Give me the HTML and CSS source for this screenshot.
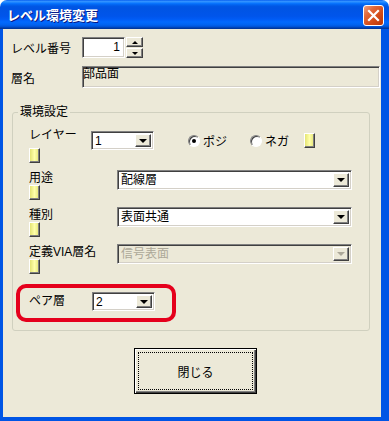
FILE: index.html
```html
<!DOCTYPE html>
<html lang="ja">
  <head>
    <meta charset="UTF-8" />
    <title>レベル環境変更</title>
    <link rel="stylesheet" href="styles.css">
  </head>
  <body>
    <div class="window">
      <div class="titlebar">
        <span class="title">レベル環境変更</span>
        <span class="close-btn">
          <svg width="19" height="19" viewBox="0 0 19 19">
            <path d="M5 5 L14 14 M14 5 L5 14" stroke="#fff" stroke-width="2.2" stroke-linecap="square" />
          </svg>
        </span>
      </div>

      <div class="client">
        <div class="field-row level-row">
          <span class="label">レベル番号</span>
          <div class="spin">
            <div class="spin-edit">1</div>
            <div class="spin-btns">
              <span class="spin-btn"><i class="arrow-up"></i></span>
              <span class="spin-btn"><i class="arrow-down"></i></span>
            </div>
          </div>
        </div>

        <div class="field-row name-row">
          <span class="label">層名</span>
          <div class="text-field">部品面</div>
        </div>

        <fieldset class="group">
          <legend>環境設定</legend>
          <div class="group-body">
            <!-- layer -->
            <div class="item layer-item">
              <div class="item-head">
                <span class="item-label">レイヤー</span>
                <span class="mini"></span>
              </div>
              <div class="line">
                <div class="combo combo-small">
                  <span class="combo-text">1</span>
                  <span class="drop-btn"><i class="arrow-down big"></i></span>
                </div>
                <span class="radio checked"></span><span class="radio-text">ポジ</span>
                <span class="radio nega"></span><span class="radio-text">ネガ</span>
                <span class="mini mini-right"></span>
              </div>
            </div>

            <div class="item">
              <div class="item-head wide">
                <span class="item-label">用途</span>
                <span class="mini"></span>
              </div>
              <div class="combo combo-wide">
                <span class="combo-text">配線層</span>
                <span class="drop-btn"><i class="arrow-down big"></i></span>
              </div>
            </div>

            <div class="item">
              <div class="item-head wide">
                <span class="item-label">種別</span>
                <span class="mini"></span>
              </div>
              <div class="combo combo-wide">
                <span class="combo-text">表面共通</span>
                <span class="drop-btn"><i class="arrow-down big"></i></span>
              </div>
            </div>

            <div class="item">
              <div class="item-head wide">
                <span class="item-label">定義VIA層名</span>
                <span class="mini"></span>
              </div>
              <div class="combo combo-wide disabled">
                <span class="combo-text">信号表面</span>
                <span class="drop-btn"><i class="arrow-down big"></i></span>
              </div>
            </div>

            <div class="pair-box">
              <span class="pair-label">ペア層</span>
              <div class="combo combo-small">
                <span class="combo-text">2</span>
                <span class="drop-btn"><i class="arrow-down big"></i></span>
              </div>
            </div>
          </div>
        </fieldset>

        <div class="button-row">
          <button class="close-dialog"><span class="focus-rect">閉じる</span></button>
        </div>
      </div>
    </div>
  </body>
</html>
```

FILE: styles.css
```css
body {
  margin: 0;
  background: #fff;
  font-family: "Liberation Sans", "Noto Sans CJK JP", sans-serif;
  font-size: 12px;
  color: #000;
}
.window {
  width: 389px;
  height: 421px;
  display: flex;
  flex-direction: column;
}

/* title bar */
.titlebar {
  height: 29px;
  flex: none;
  box-sizing: border-box;
  padding: 0 5px 0 7px;
  display: flex;
  align-items: center;
  justify-content: space-between;
  border-radius: 7px 7px 0 0;
  background: linear-gradient(to bottom, #0058ee 0%, #3593ff 4%, #288eff 7%, #127dff 10%, #036ffc 13%, #0262ee 17%, #0057e5 22%, #0054e3 28%, #0055eb 56%, #005bf5 66%, #026afe 76%, #0062ef 86%, #0052d6 92%, #0040ab 96%, #003092 100%);
}
.title {
  color: #fff;
  font-weight: bold;
  font-size: 13px;
  line-height: 16px;
  margin-top: 3px;
  text-shadow: 1px 1px #0a1883;
}
.close-btn {
  width: 21px;
  height: 21px;
  box-sizing: border-box;
  margin-top: 2px;
  border: 1px solid #fff;
  border-radius: 3px;
  display: flex;
  background: linear-gradient(135deg, #eea184 0%, #e2683a 30%, #d24a17 65%, #b8360a 100%);
}

/* client area */
.client {
  flex: 1;
  background: #ece9d8;
  border-left: 3px solid #0055e5;
  border-right: 8px solid #0055e5;
  border-bottom: 4px solid #0055e5;
  padding: 8px 0 0 8px;
}
.field-row {
  display: flex;
  align-items: center;
}
.field-row .label {
  width: 71px;
  flex: none;
}
.level-row {
  height: 21px;
}
.name-row {
  height: 22px;
  margin-top: 8px;
}

.spin {
  display: flex;
}
.spin-edit,
.text-field,
.combo {
  box-sizing: border-box;
  border: 1px solid;
  border-color: #808080 #fff #fff #808080;
  box-shadow: inset 1px 1px #404040, inset -1px -1px #d4d0c8;
}
.spin-edit {
  width: 43px;
  height: 21px;
  background: #fff;
  text-align: right;
  padding-right: 4px;
  line-height: 19px;
}
.spin-btns {
  display: flex;
  flex-direction: column;
  gap: 1px;
  margin-left: 1px;
}
.spin-btn,
.drop-btn,
.mini {
  box-sizing: border-box;
  border: 1px solid;
  border-color: #fff #404040 #404040 #fff;
  box-shadow: inset -1px -1px #808080;
}
.spin-btn {
  width: 17px;
  height: 10px;
  background: #ece9d8;
  display: flex;
  align-items: center;
  justify-content: center;
}
.arrow-up,
.arrow-down {
  width: 0;
  height: 0;
  border-left: 3px solid transparent;
  border-right: 3px solid transparent;
}
.arrow-up {
  border-bottom: 3px solid #000;
}
.arrow-down {
  border-top: 3px solid #000;
}
.arrow-down.big {
  border-left-width: 4px;
  border-right-width: 4px;
  border-top-width: 4px;
}
.text-field {
  width: 298px;
  height: 22px;
  background: #ece9d8;
  line-height: 14px;
}

/* group */
.group {
  margin: 17px 0 0 1px;
  padding: 0;
  width: 358px;
  height: 226px;
  box-sizing: border-box;
  border: 1px solid #d0d0bf;
  border-radius: 3px;
}
.group legend {
  margin-left: 5px;
  padding: 0 2px;
  line-height: 14px;
}
.group-body {
  padding: 12px 0 0 16px;
}
.item {
  display: flex;
  align-items: flex-start;
  margin-top: 7px;
}
.layer-item {
  margin-top: 0;
}
.item-head {
  display: flex;
  flex-direction: column;
  flex: none;
  width: 62px;
}
.item-head.wide {
  width: 88px;
}
.item-label {
  line-height: 14px;
  margin-top: 1px;
}
.layer-item .item-label {
  margin-top: -3px;
  margin-bottom: 6px;
}
.mini {
  width: 11px;
  height: 15px;
  background: linear-gradient(to right, #e4e474, #ffffaa 50%, #e4e474);
}
.line {
  display: flex;
  align-items: center;
  height: 19px;
}

/* combo boxes */
.combo {
  display: flex;
  padding: 2px;
  background: #fff;
}
.combo-small {
  width: 63px;
  height: 19px;
}
.combo-wide {
  width: 235px;
  height: 20px;
}
.combo-text {
  flex: 1;
  padding-left: 1px;
  line-height: 15px;
}
.drop-btn {
  width: 16px;
  flex: none;
  background: #ece9d8;
  display: flex;
  align-items: center;
  justify-content: center;
}
.combo.disabled {
  background: #ece9d8;
  color: #aca899;
}
.combo.disabled .arrow-down {
  border-top-color: #aca899;
}

/* radios */
.radio {
  width: 12px;
  height: 12px;
  box-sizing: border-box;
  margin-left: 34px;
  border-radius: 50%;
  border: 1px solid;
  border-color: #808080 #fff #fff #808080;
  box-shadow: inset 1px 1px #404040;
  background: #fff;
  display: flex;
  align-items: center;
  justify-content: center;
}
.radio.checked::after {
  content: "";
  width: 4px;
  height: 4px;
  border-radius: 50%;
  background: #000;
}
.radio.nega {
  margin-left: 23px;
}
.radio-text {
  margin-left: 3px;
}
.mini-right {
  margin-left: 15px;
}

/* highlighted pair row */
.pair-box {
  margin: 10px 0 0 -13px;
  width: 160px;
  height: 38px;
  box-sizing: border-box;
  border: 4px solid #e5001c;
  border-radius: 10px;
  padding: 4px 0 0 9px;
  display: flex;
  align-items: flex-start;
}
.pair-label {
  width: 63px;
  line-height: 19px;
}

/* close button */
.button-row {
  margin-top: 17px;
  padding-left: 123px;
}
.close-dialog {
  width: 123px;
  height: 46px;
  padding: 3px;
  border: 1px solid #000;
  background: #ece9d8;
  box-shadow: inset 1px 1px #fff, inset -1px -1px #404040, inset -2px -2px #808080;
  font: inherit;
  color: #000;
  display: flex;
}
.focus-rect {
  flex: 1;
  border: 1px dotted #000;
  display: flex;
  align-items: center;
  justify-content: center;
}
```
